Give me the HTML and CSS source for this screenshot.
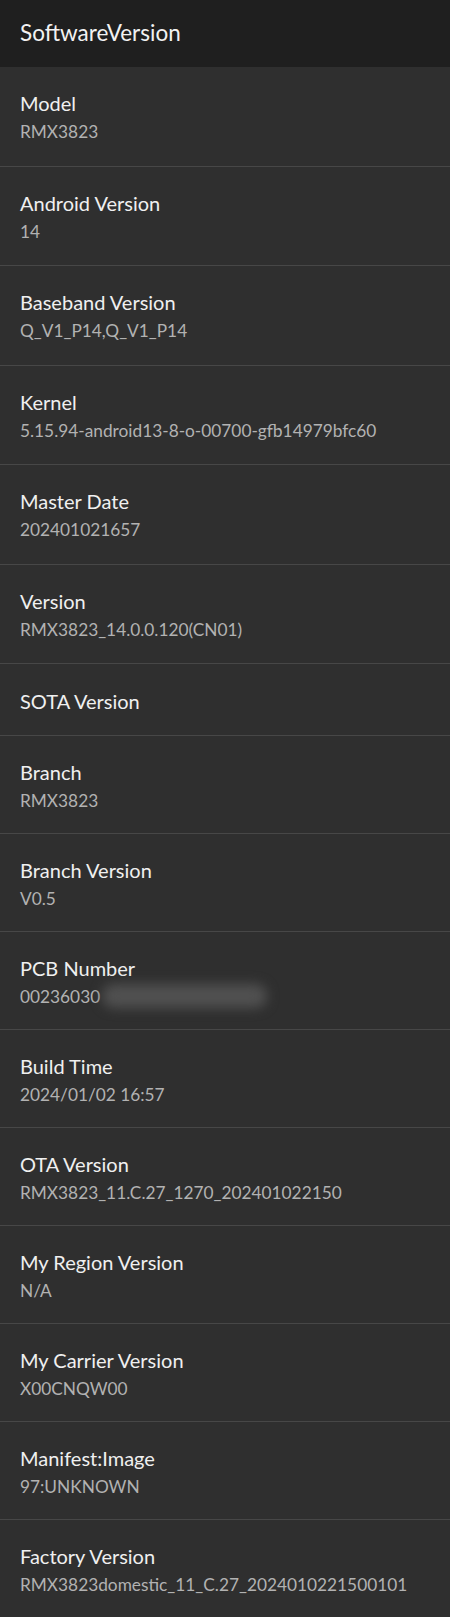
FILE: index.html
```html
<!DOCTYPE html>
<html>

<head>
    <meta charset="utf-8" />
    <link rel="stylesheet" href="styles.css">
</head>

<body>
    <div class="toolbar">SoftwareVersion</div>

    <ul class="prefs">
        <li class="pref tall">
            <div class="title">Model</div>
            <div class="summary">RMX3823</div>
        </li>
        <li class="pref tall">
            <div class="title">Android Version</div>
            <div class="summary">14</div>
        </li>
        <li class="pref tall">
            <div class="title">Baseband Version</div>
            <div class="summary">Q_V1_P14,Q_V1_P14</div>
        </li>
        <li class="pref tall">
            <div class="title">Kernel</div>
            <div class="summary">5.15.94-android13-8-o-00700-gfb14979bfc60</div>
        </li>
        <li class="pref tall">
            <div class="title">Master Date</div>
            <div class="summary">202401021657</div>
        </li>
        <li class="pref tall">
            <div class="title">Version</div>
            <div class="summary">RMX3823_14.0.0.120(CN01)</div>
        </li>
        <li class="pref single">
            <div class="title">SOTA Version</div>
        </li>
        <li class="pref">
            <div class="title">Branch</div>
            <div class="summary">RMX3823</div>
        </li>
        <li class="pref">
            <div class="title">Branch Version</div>
            <div class="summary">V0.5</div>
        </li>
        <li class="pref">
            <div class="title">PCB Number</div>
            <div class="summary">00236030<span class="masked"></span></div>
        </li>
        <li class="pref">
            <div class="title">Build Time</div>
            <div class="summary">2024/01/02 16:57</div>
        </li>
        <li class="pref">
            <div class="title">OTA Version</div>
            <div class="summary">RMX3823_11.C.27_1270_202401022150</div>
        </li>
        <li class="pref">
            <div class="title">My Region Version</div>
            <div class="summary">N/A</div>
        </li>
        <li class="pref">
            <div class="title">My Carrier Version</div>
            <div class="summary">X00CNQW00</div>
        </li>
        <li class="pref">
            <div class="title">Manifest:Image</div>
            <div class="summary">97:UNKNOWN</div>
        </li>
        <li class="pref last">
            <div class="title">Factory Version</div>
            <div class="summary">RMX3823domestic_11_C.27_2024010221500101</div>
        </li>
    </ul>
</body>

</html>
```

FILE: styles.css
```css
html,
body {
    margin: 0;
    padding: 0;
    background-color: #2f2f2f;
    font-family: Lato, "Noto Sans", sans-serif;
}

.toolbar {
    height: 67px;
    box-sizing: border-box;
    padding: 0 20px 3px;
    display: flex;
    align-items: center;
    background-color: #1f1f1f;
    color: #f2f2f2;
    font-size: 22.5px;
}

.prefs {
    list-style: none;
    margin: 0;
    padding: 0;
}

.pref {
    height: 98px;
    box-sizing: border-box;
    padding: 3px 20px 0;
    display: flex;
    flex-direction: column;
    justify-content: center;
    border-bottom: 1px solid #474747;
}

.pref.tall {
    height: 99.5px;
}

.pref.single {
    height: 72px;
}

.pref.last {
    border-bottom: none;
}

.title {
    color: #f0f0f0;
    font-size: 20px;
    line-height: 27px;
}

.summary {
    color: #b2b2b2;
    font-size: 17.3px;
    line-height: 27px;
    margin-top: 1px;
    white-space: nowrap;
}

.masked {
    display: inline-block;
    width: 165px;
    height: 24px;
    margin-left: 2px;
    vertical-align: -5px;
    background-color: #505050;
    border-radius: 12px;
    filter: blur(6px);
}
```
